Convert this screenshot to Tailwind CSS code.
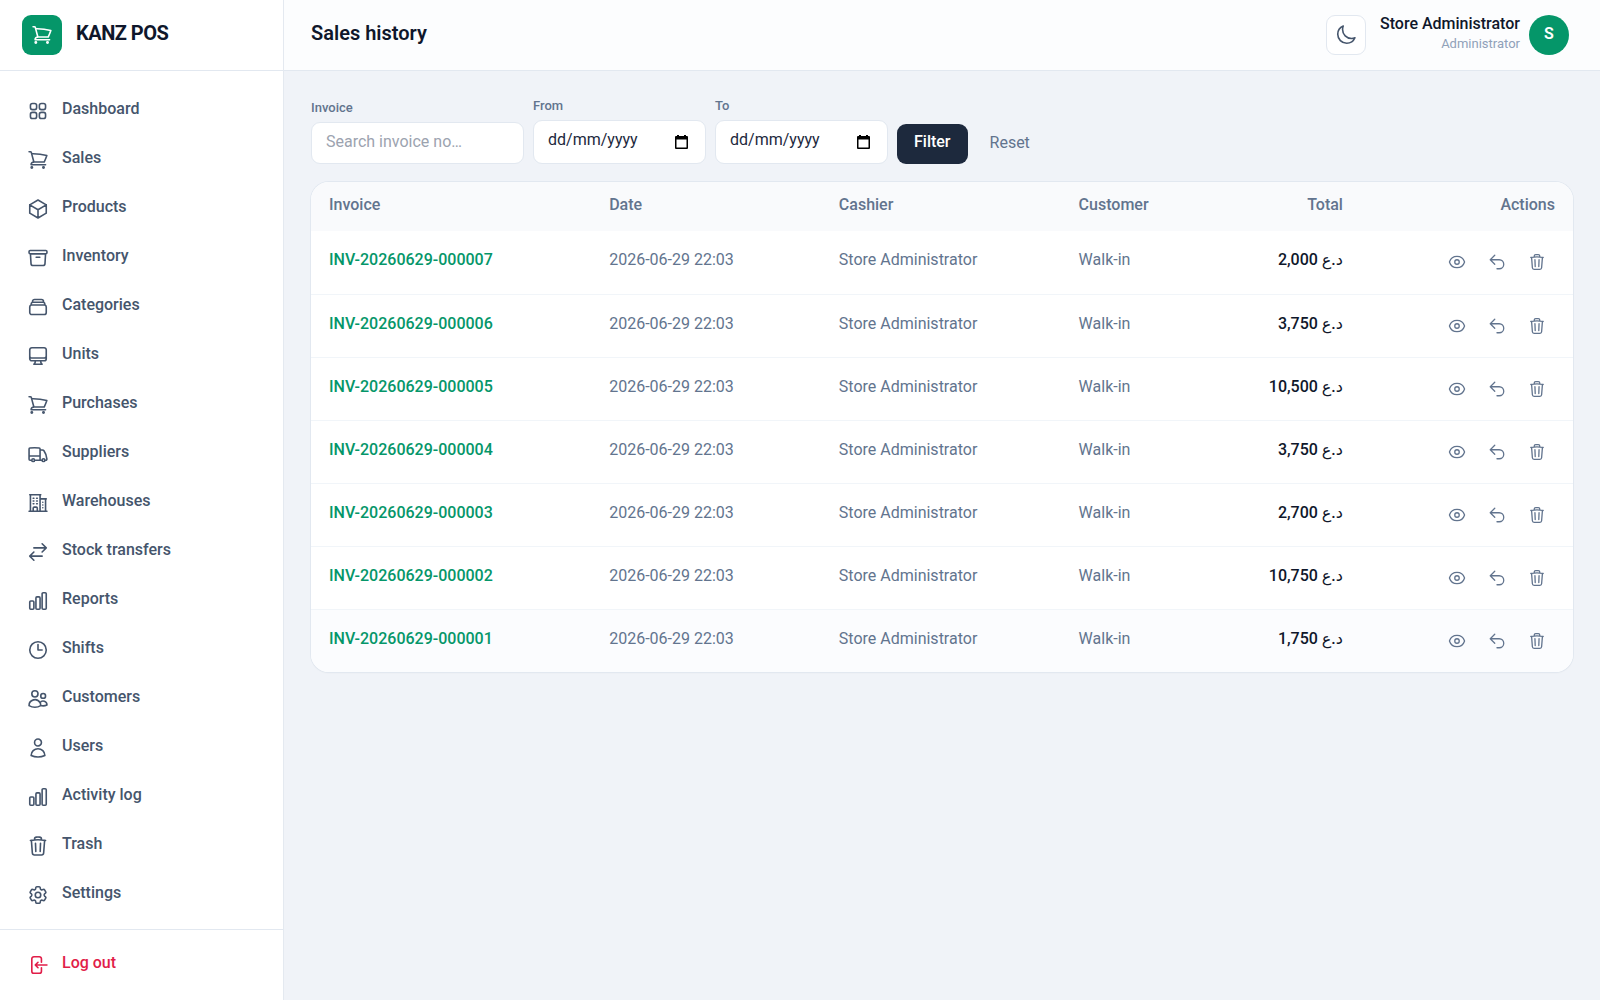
<!DOCTYPE html>
<html lang="en-GB">
<head>
  <meta charset="UTF-8" />
  <meta name="viewport" content="width=device-width, initial-scale=1.0">
  <title>Sales history - KANZ POS</title>
  <script src="https://cdn.jsdelivr.net/npm/@tailwindcss/browser@4"></script>
</head>
<body class="min-h-screen flex bg-[#f0f3f8] font-[Roboto,'DejaVu_Sans',sans-serif] text-[16px] leading-[22px] text-slate-800">

  <!-- icons -->
  <svg class="hidden">
    <symbol id="grid" viewBox="0 0 24 24"><path d="M3.75 6A2.25 2.25 0 0 1 6 3.75h2.25A2.25 2.25 0 0 1 10.5 6v2.25a2.25 2.25 0 0 1-2.25 2.25H6a2.25 2.25 0 0 1-2.25-2.25V6ZM3.75 15.75A2.25 2.25 0 0 1 6 13.5h2.25a2.25 2.25 0 0 1 2.25 2.25V18a2.25 2.25 0 0 1-2.25 2.25H6A2.25 2.25 0 0 1 3.75 18v-2.25ZM13.5 6a2.25 2.25 0 0 1 2.25-2.25H18A2.25 2.25 0 0 1 20.25 6v2.25A2.25 2.25 0 0 1 18 10.5h-2.25a2.25 2.25 0 0 1-2.25-2.25V6ZM13.5 15.75a2.25 2.25 0 0 1 2.25-2.25H18a2.25 2.25 0 0 1 2.25 2.25V18A2.25 2.25 0 0 1 18 20.25h-2.25A2.25 2.25 0 0 1 13.5 18v-2.25Z"/></symbol>
    <symbol id="cart" viewBox="0 0 24 24"><path d="M2.25 3h1.386c.51 0 .955.343 1.087.835l.383 1.437M7.5 14.25a3 3 0 0 0-3 3h15.75m-12.75-3h11.218c1.121-2.3 2.1-4.684 2.924-7.138a60.114 60.114 0 0 0-16.536-1.84M7.5 14.25 5.106 5.272M6 20.25a.75.75 0 1 1-1.5 0 .75.75 0 0 1 1.5 0Zm12.75 0a.75.75 0 1 1-1.5 0 .75.75 0 0 1 1.5 0Z"/></symbol>
    <symbol id="cube" viewBox="0 0 24 24"><path d="m21 7.5-9-5.25L3 7.5m18 0-9 5.25m9-5.25v9l-9 5.25M3 7.5l9 5.25M3 7.5v9l9 5.25m0-9v9"/></symbol>
    <symbol id="archive" viewBox="0 0 24 24"><path d="m20.25 7.5-.625 10.632a2.25 2.25 0 0 1-2.247 2.118H6.622a2.25 2.25 0 0 1-2.247-2.118L3.75 7.5M10 11.25h4M3.375 7.5h17.25c.621 0 1.125-.504 1.125-1.125v-1.5c0-.621-.504-1.125-1.125-1.125H3.375c-.621 0-1.125.504-1.125 1.125v1.5c0 .621.504 1.125 1.125 1.125Z"/></symbol>
    <symbol id="stack" viewBox="0 0 24 24"><path d="M6 6.878V6a2.25 2.25 0 0 1 2.25-2.25h7.5A2.25 2.25 0 0 1 18 6v.878m-12 0c.235-.083.487-.128.75-.128h10.5c.263 0 .515.045.75.128m-12 0A2.25 2.25 0 0 0 4.5 9v.878m13.5-3A2.25 2.25 0 0 1 19.5 9v.878m0 0a2.246 2.246 0 0 0-.75-.128H5.25c-.263 0-.515.045-.75.128m15 0A2.25 2.25 0 0 1 21 12v6a2.25 2.25 0 0 1-2.25 2.25H5.25A2.25 2.25 0 0 1 3 18v-6c0-.98.626-1.813 1.5-2.122"/></symbol>
    <symbol id="desktop" viewBox="0 0 24 24"><path d="M9 17.25v1.007a3 3 0 0 1-.879 2.122L7.5 21h9l-.621-.621A3 3 0 0 1 15 18.257V17.25m6-12V15a2.25 2.25 0 0 1-2.25 2.25H5.25A2.25 2.25 0 0 1 3 15V5.25m18 0A2.25 2.25 0 0 0 18.75 3H5.25A2.25 2.25 0 0 0 3 5.25m18 0V12a2.25 2.25 0 0 1-2.25 2.25H5.25A2.25 2.25 0 0 1 3 12V5.25"/></symbol>
    <symbol id="truck" viewBox="0 0 24 24"><path d="M8.25 18.75a1.5 1.5 0 0 1-3 0m3 0a1.5 1.5 0 0 0-3 0m3 0h6m-9 0H3.375a1.125 1.125 0 0 1-1.125-1.125V14.25m17.25 4.5a1.5 1.5 0 0 1-3 0m3 0a1.5 1.5 0 0 0-3 0m3 0h1.125c.621 0 1.129-.504 1.09-1.124a17.902 17.902 0 0 0-3.213-9.193 2.056 2.056 0 0 0-1.58-.86H14.25M16.5 18.75h-2.25m0-11.177v-.958c0-.568-.422-1.048-.987-1.106a48.554 48.554 0 0 0-10.026 0 1.106 1.106 0 0 0-.987 1.106v7.635m12-6.677v6.677m0 4.5v-4.5m0 0h-12"/></symbol>
    <symbol id="building" viewBox="0 0 24 24"><path d="M2.25 21h19.5m-18-18v18m10.5-18v18m6-13.5V21M6.75 6.75h.75m-.75 3h.75m-.75 3h.75m3-6h.75m-.75 3h.75m-.75 3h.75M6.75 21v-3.375c0-.621.504-1.125 1.125-1.125h2.25c.621 0 1.125.504 1.125 1.125V21M3 3h12m-.75 4.5H21m-3.75 3.75h.008v.008h-.008v-.008Zm0 3h.008v.008h-.008v-.008Zm0 3h.008v.008h-.008v-.008Z"/></symbol>
    <symbol id="transfer" viewBox="0 0 24 24"><path d="M7.5 21 3 16.5m0 0L7.5 12M3 16.5h13.5m0-13.5L21 7.5m0 0L16.5 12M21 7.5H7.5"/></symbol>
    <symbol id="chart" viewBox="0 0 24 24"><path d="M3 13.125C3 12.504 3.504 12 4.125 12h2.25c.621 0 1.125.504 1.125 1.125v6.75C7.5 20.496 6.996 21 6.375 21h-2.25A1.125 1.125 0 0 1 3 19.875v-6.75ZM9.75 8.625c0-.621.504-1.125 1.125-1.125h2.25c.621 0 1.125.504 1.125 1.125v11.25c0 .621-.504 1.125-1.125 1.125h-2.25a1.125 1.125 0 0 1-1.125-1.125V8.625ZM16.5 4.125c0-.621.504-1.125 1.125-1.125h2.25C20.496 3 21 3.504 21 4.125v15.75c0 .621-.504 1.125-1.125 1.125h-2.25a1.125 1.125 0 0 1-1.125-1.125V4.125Z"/></symbol>
    <symbol id="clock" viewBox="0 0 24 24"><path d="M12 6v6h4.5m4.5 0a9 9 0 1 1-18 0 9 9 0 0 1 18 0Z"/></symbol>
    <symbol id="users" viewBox="0 0 24 24"><path d="M15 19.128a9.38 9.38 0 0 0 2.625.372 9.337 9.337 0 0 0 4.121-.952 4.125 4.125 0 0 0-7.533-2.493M15 19.128v-.003c0-1.113-.285-2.16-.786-3.07M15 19.128v.106A12.318 12.318 0 0 1 8.624 21c-2.331 0-4.512-.645-6.374-1.766l-.001-.109a6.375 6.375 0 0 1 11.964-3.07M12 6.375a3.375 3.375 0 1 1-6.75 0 3.375 3.375 0 0 1 6.75 0Zm8.25 2.25a2.625 2.625 0 1 1-5.25 0 2.625 2.625 0 0 1 5.25 0Z"/></symbol>
    <symbol id="user" viewBox="0 0 24 24"><path d="M15.75 6a3.75 3.75 0 1 1-7.5 0 3.75 3.75 0 0 1 7.5 0ZM4.501 20.118a7.5 7.5 0 0 1 14.998 0A17.933 17.933 0 0 1 12 21.75c-2.676 0-5.216-.584-7.499-1.632Z"/></symbol>
    <symbol id="trash" viewBox="0 0 24 24"><path d="m14.74 9-.346 9m-4.788 0L9.26 9m9.968-3.21c.342.052.682.107 1.022.166m-1.022-.165L18.16 19.673a2.25 2.25 0 0 1-2.244 2.077H8.084a2.25 2.25 0 0 1-2.244-2.077L4.772 5.79m14.456 0a48.108 48.108 0 0 0-3.478-.397m-12 .562c.34-.059.68-.114 1.022-.165m0 0a48.11 48.11 0 0 1 3.478-.397m7.5 0v-.916c0-1.18-.91-2.164-2.09-2.201a51.964 51.964 0 0 0-3.32 0c-1.18.037-2.09 1.022-2.09 2.201v.916m7.5 0a48.667 48.667 0 0 0-7.5 0"/></symbol>
    <symbol id="cog" viewBox="0 0 24 24"><path d="M9.594 3.94c.09-.542.56-.94 1.11-.94h2.593c.55 0 1.02.398 1.11.94l.213 1.281c.063.374.313.686.645.87.074.04.147.083.22.127.325.196.72.257 1.075.124l1.217-.456a1.125 1.125 0 0 1 1.37.49l1.296 2.247a1.125 1.125 0 0 1-.26 1.431l-1.003.827c-.293.241-.438.613-.43.992a7.723 7.723 0 0 1 0 .255c-.008.378.137.75.43.991l1.004.827c.424.35.534.955.26 1.43l-1.298 2.247a1.125 1.125 0 0 1-1.369.491l-1.217-.456c-.355-.133-.75-.072-1.076.124a6.47 6.47 0 0 1-.22.128c-.331.183-.581.495-.644.869l-.213 1.281c-.09.543-.56.94-1.11.94h-2.594c-.55 0-1.019-.398-1.11-.94l-.213-1.281c-.062-.374-.312-.686-.644-.87a6.52 6.52 0 0 1-.22-.127c-.325-.196-.72-.257-1.076-.124l-1.217.456a1.125 1.125 0 0 1-1.369-.49l-1.297-2.247a1.125 1.125 0 0 1 .26-1.431l1.004-.827c.292-.24.437-.613.43-.991a6.932 6.932 0 0 1 0-.255c.007-.38-.138-.751-.43-.992l-1.004-.827a1.125 1.125 0 0 1-.26-1.43l1.297-2.247a1.125 1.125 0 0 1 1.37-.491l1.216.456c.356.133.751.072 1.076-.124.072-.044.146-.086.22-.128.332-.183.582-.495.644-.869l.214-1.28ZM15 12a3 3 0 1 1-6 0 3 3 0 0 1 6 0Z"/></symbol>
    <symbol id="logout" viewBox="0 0 24 24"><path d="M15.75 9V5.25A2.25 2.25 0 0 0 13.5 3h-6a2.25 2.25 0 0 0-2.25 2.25v13.5A2.25 2.25 0 0 0 7.5 21h6a2.25 2.25 0 0 0 2.25-2.25V15M12 9l-3 3m0 0 3 3m-3-3h12.75"/></symbol>
    <symbol id="eye" viewBox="0 0 24 24"><path d="M2.036 12.322a1.012 1.012 0 0 1 0-.639C3.423 7.51 7.36 4.5 12 4.5c4.638 0 8.573 3.007 9.963 7.178.07.207.07.431 0 .639C20.577 16.49 16.64 19.5 12 19.5c-4.638 0-8.573-3.007-9.963-7.178ZM15 12a3 3 0 1 1-6 0 3 3 0 0 1 6 0Z"/></symbol>
    <symbol id="undo" viewBox="0 0 24 24"><path d="M9 15 3 9m0 0 6-6M3 9h12a6 6 0 0 1 0 12h-3"/></symbol>
    <symbol id="moon" viewBox="0 0 24 24"><path d="M21.752 15.002A9.72 9.72 0 0 1 18 15.75c-5.385 0-9.75-4.365-9.75-9.75 0-1.33.266-2.597.748-3.752A9.753 9.753 0 0 0 3 11.25C3 16.635 7.365 21 12.75 21a9.753 9.753 0 0 0 9.002-5.998Z"/></symbol>
    <symbol id="calendar" viewBox="0 0 13 14"><path d="M2 0h2v1h5V0h2v1h1q1 0 1 1v11q0 1-1 1H1q-1 0-1-1V2q0-1 1-1h1ZM1.500 4.500v8h10v-8Z" fill-rule="evenodd"/></symbol>
  </svg>

  <!-- sidebar -->
  <aside class="w-[284px] shrink-0 flex flex-col bg-white border-r border-[#e4e9f0]">
    <div class="h-[71px] flex items-center gap-[14px] px-[22px] border-b border-slate-200">
      <span class="size-[40px] rounded-[9px] bg-[#059669] text-white grid place-items-center">
        <svg class="size-[22px] fill-none stroke-current stroke-[1.75] [stroke-linecap:round] [stroke-linejoin:round]"><use href="#cart"/></svg>
      </span>
      <span class="text-[20px] leading-[28px] font-bold tracking-tight text-slate-900 pb-1">KANZ POS</span>
    </div>
    <nav id="nav" class="flex-1 flex flex-col gap-[5px] px-[13px] pt-[18px] text-slate-600 font-medium"></nav>
    <div class="px-[13px] py-[13px] border-t border-slate-200">
      <button type="button" class="w-full h-[44px] flex items-center gap-[13px] px-[14px] text-[#e11d48] font-medium">
        <svg class="size-[22px] fill-none stroke-current stroke-[1.75] [stroke-linecap:round] [stroke-linejoin:round]"><use href="#logout"/></svg>
        <span class="pb-1">Log out</span>
      </button>
    </div>
  </aside>

  <div class="flex-1 min-w-0">
    <!-- top bar -->
    <header class="h-[71px] flex items-center bg-[#fcfdfe] border-b border-slate-200 pl-[27px] pr-[31px]">
      <h1 class="flex-1 text-[20px] leading-[28px] font-semibold text-slate-900 pb-1">Sales history</h1>
      <button type="button" aria-label="Dark mode" class="size-[40px] grid place-items-center rounded-[9px] bg-white border border-slate-200 text-slate-600 mr-[14px]">
        <svg class="size-[22px] fill-none stroke-current stroke-[1.75] [stroke-linecap:round] [stroke-linejoin:round]"><use href="#moon"/></svg>
      </button>
      <div class="text-right mr-[9px] pb-[2px]">
        <p class="leading-[20px] font-medium text-slate-900">Store Administrator</p>
        <p class="text-[13px] leading-[20px] text-slate-400">Administrator</p>
      </div>
      <span class="size-[40px] grid place-items-center rounded-full bg-[#059669] text-white font-semibold pb-[2px]">S</span>
    </header>

    <main class="px-[27px] pt-[26px]">
      <form class="flex items-end gap-[9px] mb-[18px]">
        <div class="flex flex-col gap-[5px]">
          <label for="q" class="text-[13px] leading-[18px] font-medium text-slate-500">Invoice</label>
          <input id="q" type="text" placeholder="Search invoice no…" class="w-[213px] h-[42px] px-[14px] pb-1 rounded-[9px] bg-white border border-slate-200 placeholder:text-[#9ca3af]">
        </div>
        <div class="flex flex-col gap-[5px]">
          <label for="from" class="text-[13px] leading-[18px] font-medium text-slate-500">From</label>
          <div class="w-[173px] h-[44px] flex items-center pl-[14px] pr-[17px] rounded-[9px] bg-white border border-slate-200">
            <input id="from" type="text" placeholder="dd/mm/yyyy" class="flex-1 min-w-0 pb-1 placeholder:text-slate-800">
            <svg class="w-[13px] h-[14px] fill-black"><use href="#calendar"/></svg>
          </div>
        </div>
        <div class="flex flex-col gap-[5px]">
          <label for="to" class="text-[13px] leading-[18px] font-medium text-slate-500">To</label>
          <div class="w-[173px] h-[44px] flex items-center pl-[14px] pr-[17px] rounded-[9px] bg-white border border-slate-200">
            <input id="to" type="text" placeholder="dd/mm/yyyy" class="flex-1 min-w-0 pb-1 placeholder:text-slate-800">
            <svg class="w-[13px] h-[14px] fill-black"><use href="#calendar"/></svg>
          </div>
        </div>
        <button type="submit" class="h-[40px] px-[17px] pb-1 rounded-[9px] bg-slate-800 text-white font-medium">Filter</button>
        <a href="#" class="h-[40px] px-[13px] py-[8px] text-slate-500">Reset</a>
      </form>

      <div class="rounded-[18px] overflow-hidden ring-1 ring-slate-200 bg-white shadow-xs">
        <table class="w-full table-fixed text-left text-slate-500">
          <thead class="bg-[#f9fafc]">
            <tr class="h-[49px]">
              <th class="w-[22.2%] px-[18px] pb-1 font-medium">Invoice</th>
              <th class="w-[18.2%] px-[18px] pb-1 font-medium">Date</th>
              <th class="w-[19%] px-[18px] pb-1 font-medium">Cashier</th>
              <th class="w-[12%] px-[18px] pb-1 font-medium">Customer</th>
              <th class="w-[11.8%] px-[18px] pb-1 font-medium text-right">Total</th>
              <th class="w-[16.8%] px-[18px] pb-1 font-medium text-right">Actions</th>
            </tr>
          </thead>
          <tbody id="rows" class="divide-y divide-slate-100"></tbody>
        </table>
      </div>
    </main>
  </div>

  <script>
    const links = [
      ['grid', 'Dashboard'], ['cart', 'Sales'], ['cube', 'Products'], ['archive', 'Inventory'],
      ['stack', 'Categories'], ['desktop', 'Units'], ['cart', 'Purchases'], ['truck', 'Suppliers'],
      ['building', 'Warehouses'], ['transfer', 'Stock transfers'], ['chart', 'Reports'], ['clock', 'Shifts'],
      ['users', 'Customers'], ['user', 'Users'], ['chart', 'Activity log'], ['trash', 'Trash'], ['cog', 'Settings']
    ];
    document.getElementById('nav').innerHTML = links.map(([icon, label]) => `
      <a href="#" class="h-[44px] flex items-center gap-[13px] px-[14px]">
        <svg class="size-[22px] fill-none stroke-current stroke-[1.75] [stroke-linecap:round] [stroke-linejoin:round]"><use href="#${icon}"/></svg>
        <span class="pb-1">${label}</span>
      </a>`).join('');

    const sales = [[7, '2,000'], [6, '3,750'], [5, '10,500'], [4, '3,750'], [3, '2,700'], [2, '10,750'], [1, '1,750']];
    const action = (icon, label) => `
      <button type="button" aria-label="${label}" class="size-[36px] grid place-items-center">
        <svg class="size-[18px] fill-none stroke-current stroke-[1.75] [stroke-linecap:round] [stroke-linejoin:round]"><use href="#${icon}"/></svg>
      </button>`;
    document.getElementById('rows').innerHTML = sales.map(([no, total]) => `
      <tr class="h-[63px] last:bg-[#fbfcfe]">
        <td class="px-[18px] pb-1 font-medium"><a href="#" class="text-[#059669]">INV-20260629-00000${no}</a></td>
        <td class="px-[18px] pb-1">2026-06-29 22:03</td>
        <td class="px-[18px] pb-1">Store Administrator</td>
        <td class="px-[18px] pb-1">Walk-in</td>
        <td class="px-[18px] pb-1 text-right font-medium text-slate-900">${total} د.ع</td>
        <td class="px-[18px]"><div class="flex justify-end gap-[4px]">${action('eye', 'View')}${action('undo', 'Return')}${action('trash', 'Delete')}</div></td>
      </tr>`).join('');
  </script>
</body>
</html>
